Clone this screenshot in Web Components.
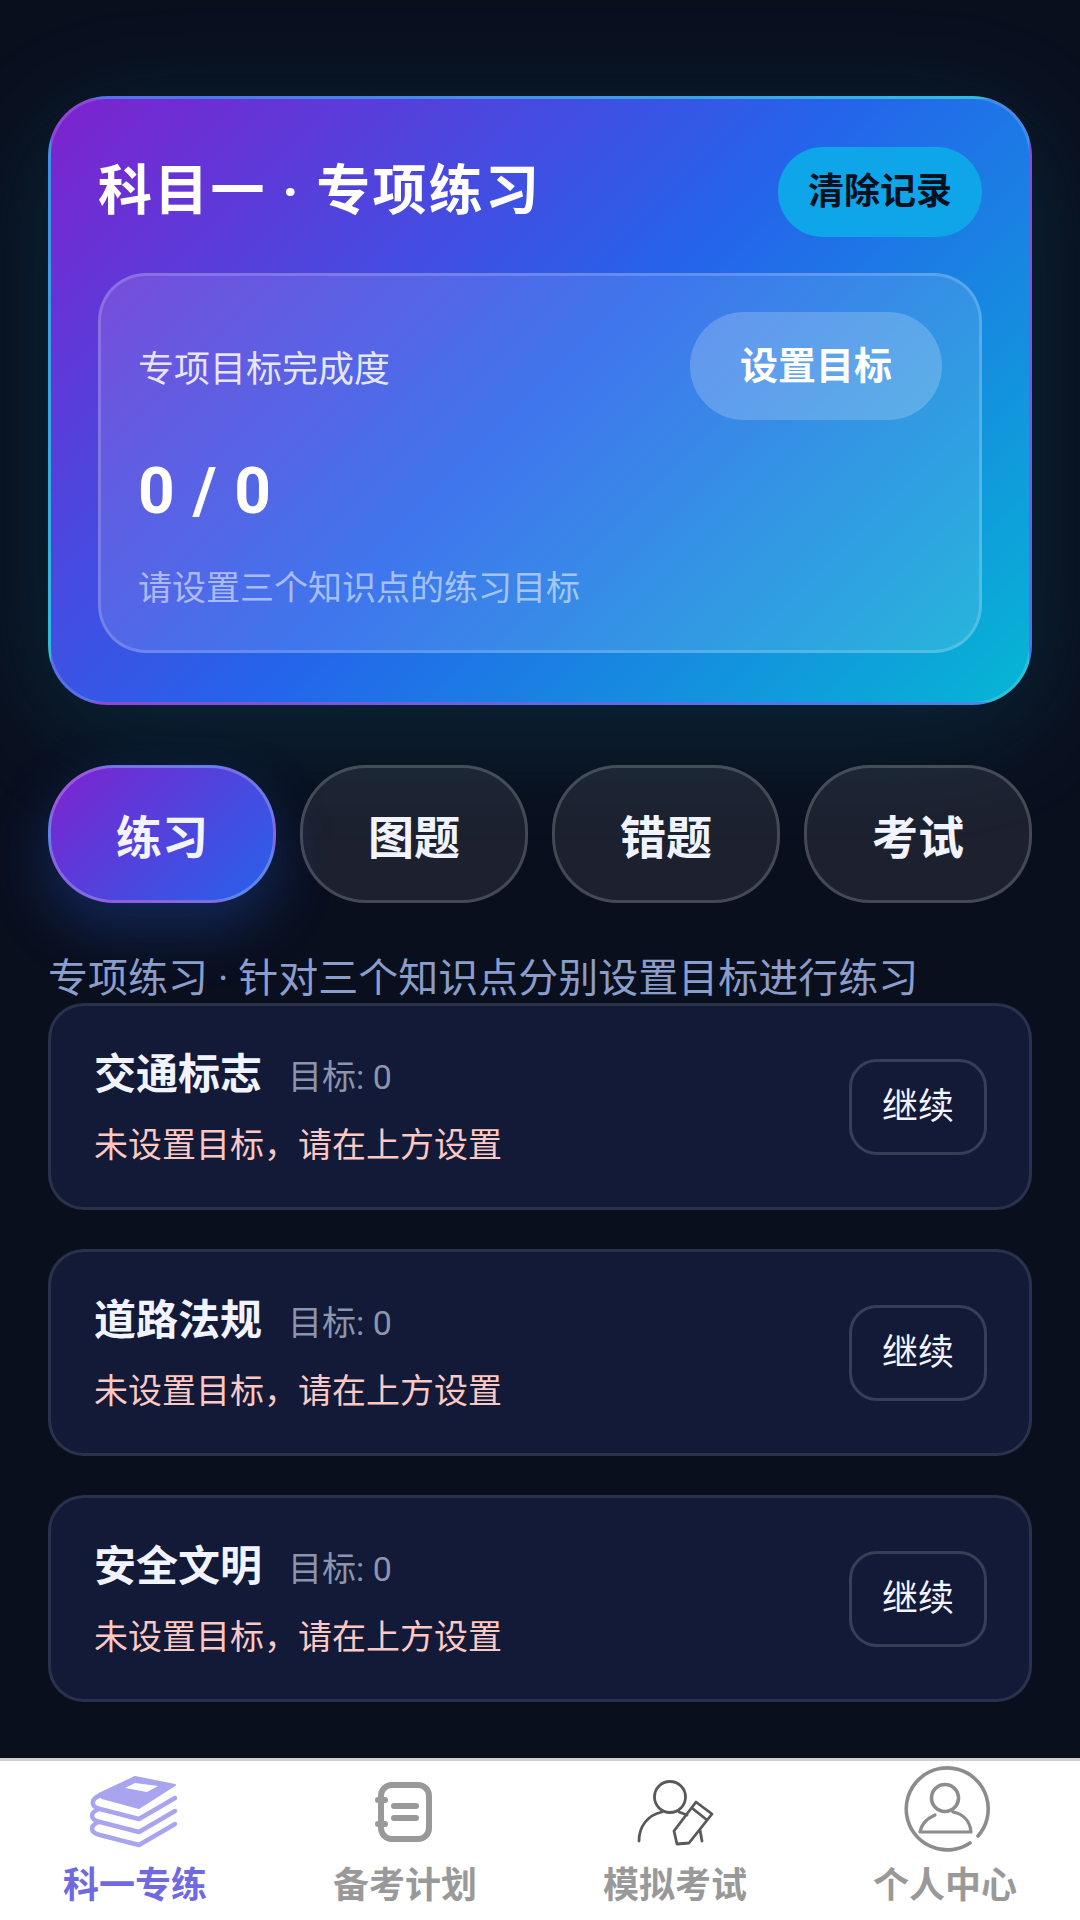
<!DOCTYPE html>
<html lang="zh-CN">
<head>
<meta charset="utf-8">
<title>科目一专项练习</title>
<style>
html,body{margin:0;padding:0;height:1920px;background:#0a0f1e}
body{font-family:Roboto,"Noto Sans CJK SC",sans-serif;overflow:hidden}
</style>
</head>
<body>
<app-shell>
  <hero-card slot="main" heading="科目一 · 专项练习" action="清除记录">
    <goal-panel label="专项目标完成度" action="设置目标" value="0 / 0" hint="请设置三个知识点的练习目标"></goal-panel>
  </hero-card>
  <mode-tabs slot="main">
    <mode-tab active>练习</mode-tab>
    <mode-tab>图题</mode-tab>
    <mode-tab>错题</mode-tab>
    <mode-tab>考试</mode-tab>
  </mode-tabs>
  <section-note slot="main">专项练习 · 针对三个知识点分别设置目标进行练习</section-note>
  <topic-card slot="main" name="交通标志" target="目标: 0" status="未设置目标，请在上方设置" action="继续"></topic-card>
  <topic-card slot="main" name="道路法规" target="目标: 0" status="未设置目标，请在上方设置" action="继续"></topic-card>
  <topic-card slot="main" name="安全文明" target="目标: 0" status="未设置目标，请在上方设置" action="继续"></topic-card>
  <bottom-nav slot="nav">
    <nav-item active label="科一专练">
      <svg viewBox="0 0 120 96" width="120" height="96" fill="none" stroke-linecap="round" stroke-linejoin="round">
        <path d="M60 11 100 19 64 42 27 32 24 28Z" fill="#a9a4ef" stroke="#a9a4ef" stroke-width="2"/>
        <path d="M50 22 60 17 83 20 72 26Z" fill="#fff"/>
        <path d="M27 29C15 32 15 41 25 43L64 53 100 32M22 44C15 47 15 54 25 56L64 66 100 45M22 57C15 60 15 67 25 69L64 79 100 58" stroke="#a9a4ef" stroke-width="4.5"/>
      </svg>
    </nav-item>
    <nav-item label="备考计划">
      <svg viewBox="0 0 120 96" width="120" height="96" fill="none" stroke="#999" stroke-width="6" stroke-linecap="round">
        <rect x="36" y="19" width="48" height="54" rx="11"/>
        <path d="M33 34H40M33 58H40M49 40H71M49 52H71"/>
      </svg>
    </nav-item>
    <nav-item label="模拟考试">
      <svg viewBox="0 0 120 96" width="120" height="96" fill="none" stroke="#595959" stroke-width="2.8" stroke-linecap="round" stroke-linejoin="round">
        <circle cx="55" cy="31" r="15.5"/>
        <path d="M24 75C24 60 33 49 47 46M64 46 72 49M85 64 87 75"/>
        <path d="M81 36 97 48 74 77 62 78 59 65ZM77 42 92 54"/>
      </svg>
    </nav-item>
    <nav-item label="个人中心">
      <svg viewBox="0 0 120 96" width="120" height="96" fill="none" stroke="#8c8c8c" stroke-linecap="round" stroke-linejoin="round">
        <path d="M85 77A41 41 0 1 1 93 70" stroke-width="3.6"/>
        <circle cx="60" cy="32" r="13.5" stroke-width="3.6"/>
        <path d="M50 49C41 53 36 59 35 66H86C85 55 78 48 68 46" stroke-width="3.2"/>
      </svg>
    </nav-item>
  </bottom-nav>
</app-shell>
<script>
const FONT = 'Roboto,"Noto Sans CJK SC",sans-serif';
function def(name, html, observed){
  customElements.define(name, class extends HTMLElement{
    connectedCallback(){
      if(this.shadowRoot) return;
      const root = this.attachShadow({mode:'open'});
      root.innerHTML = html(this);
    }
  });
}
const a = (el,k)=>el.getAttribute(k)||'';
def('app-shell', ()=>`<style>
:host{display:flex;flex-direction:column;width:1080px;height:1920px;font-family:${FONT};
background:#0a0f1e}
main{flex:1;min-height:0;overflow:hidden;display:flex;flex-direction:column;padding:96px 48px 0;box-sizing:border-box}
</style><main><slot name="main"></slot></main><slot name="nav"></slot>`);

def('hero-card', el=>`<style>
:host{display:block;box-sizing:border-box;height:609px;border-radius:60px;border:3px solid rgba(255,255,255,.16);
background:linear-gradient(135deg,#7e22ce 0%,#2563eb 50%,#06b6d4 100%);padding:48px 47px;
box-shadow:0 24px 120px rgba(6,182,212,.16)}
header{display:flex;justify-content:space-between;align-items:center;height:90px;margin-bottom:36px}
h1{margin:0;font-size:54px;font-weight:700;color:#fff;letter-spacing:2.2px;line-height:1}
button{all:unset;box-sizing:border-box;width:204px;height:90px;border-radius:45px;background:#0ea5e9;color:#04111f;
font:700 36px ${FONT};text-align:center;line-height:90px}
</style><header><h1>${a(el,'heading')}</h1><button>${a(el,'action')}</button></header><slot></slot>`);

def('goal-panel', el=>`<style>
:host{display:block;box-sizing:border-box;height:380px;border-radius:48px;border:3px solid rgba(255,255,255,.18);
background:rgba(255,255,255,.12);padding:36px 37px}
.top{display:flex;justify-content:space-between;align-items:center;height:108px}
.label{font-size:36px;color:rgba(255,255,255,.85)}
button{all:unset;box-sizing:border-box;width:252px;height:108px;border-radius:54px;background:rgba(255,255,255,.2);color:#fff;
font:700 38px ${FONT};text-align:center;line-height:108px}
.value{font-size:64px;font-weight:700;color:#fff;line-height:64px;margin-top:40px;letter-spacing:1px}
.hint{font-size:34px;color:rgba(255,255,255,.55);line-height:40px;margin-top:44px}
</style><div class="top"><span class="label">${a(el,'label')}</span><button>${a(el,'action')}</button></div>
<div class="value">${a(el,'value')}</div><div class="hint">${a(el,'hint')}</div>`);

def('mode-tabs', ()=>`<style>
:host{display:grid;grid-template-columns:repeat(4,228px);gap:24px;margin-top:60px}
</style><slot></slot>`);

def('mode-tab', el=>`<style>
:host{display:flex;align-items:center;justify-content:center;box-sizing:border-box;height:138px;border-radius:66px;
border:3px solid rgba(255,255,255,.18);background:rgba(255,255,255,.08);color:#f1f3ff;font-size:46px;font-weight:700}
:host([active]){background:linear-gradient(135deg,#7e22ce 0%,#2563eb 100%);border-color:rgba(255,255,255,.24);
box-shadow:0 24px 60px rgba(37,99,235,.3)}
</style><slot></slot>`);

def('section-note', ()=>`<style>
:host{display:block;font-size:40px;line-height:48px;color:#8b9dcb;margin-top:52px}
</style><slot></slot>`);

def('topic-card', el=>`<style>
:host{display:flex;align-items:center;justify-content:space-between;box-sizing:border-box;height:207px;flex:none;
border-radius:36px;border:3px solid rgba(255,255,255,.1);background:#121a37;padding:0 42px 0 43px;margin-top:39px}
:host(:first-of-type){margin-top:0}
.row{display:flex;align-items:baseline;gap:26px;line-height:56px}
b{font-size:42px;font-weight:700;color:#f1f3ff}
.t{font-size:34px;color:#8b95ad}
.s{font-size:34px;color:#fcc8c4;line-height:44px;margin-top:18px}
button{all:unset;box-sizing:border-box;width:138px;height:96px;border-radius:28px;border:3px solid rgba(255,255,255,.16);
color:#f1f3ff;font:400 36px ${FONT};text-align:center;line-height:90px}
</style><div><div class="row"><b>${a(el,'name')}</b><span class="t">${a(el,'target')}</span></div>
<div class="s">${a(el,'status')}</div></div><button>${a(el,'action')}</button>`);

def('bottom-nav', ()=>`<style>
:host{display:grid;grid-template-columns:repeat(4,270px);box-sizing:border-box;height:162px;flex:none;background:#fff;
border-top:3px solid #cfcfcf}
</style><slot></slot>`);

def('nav-item', el=>`<style>
:host{display:flex;flex-direction:column;align-items:center;padding-top:5px;color:#999}
:host([active]){color:#7069e0}
.i{height:96px;width:120px}
span{font-size:36px;font-weight:700;line-height:48px}
::slotted(svg){display:block}
</style><div class="i"><slot></slot></div><span>${a(el,'label')}</span>`);
</script>
</body>
</html>
